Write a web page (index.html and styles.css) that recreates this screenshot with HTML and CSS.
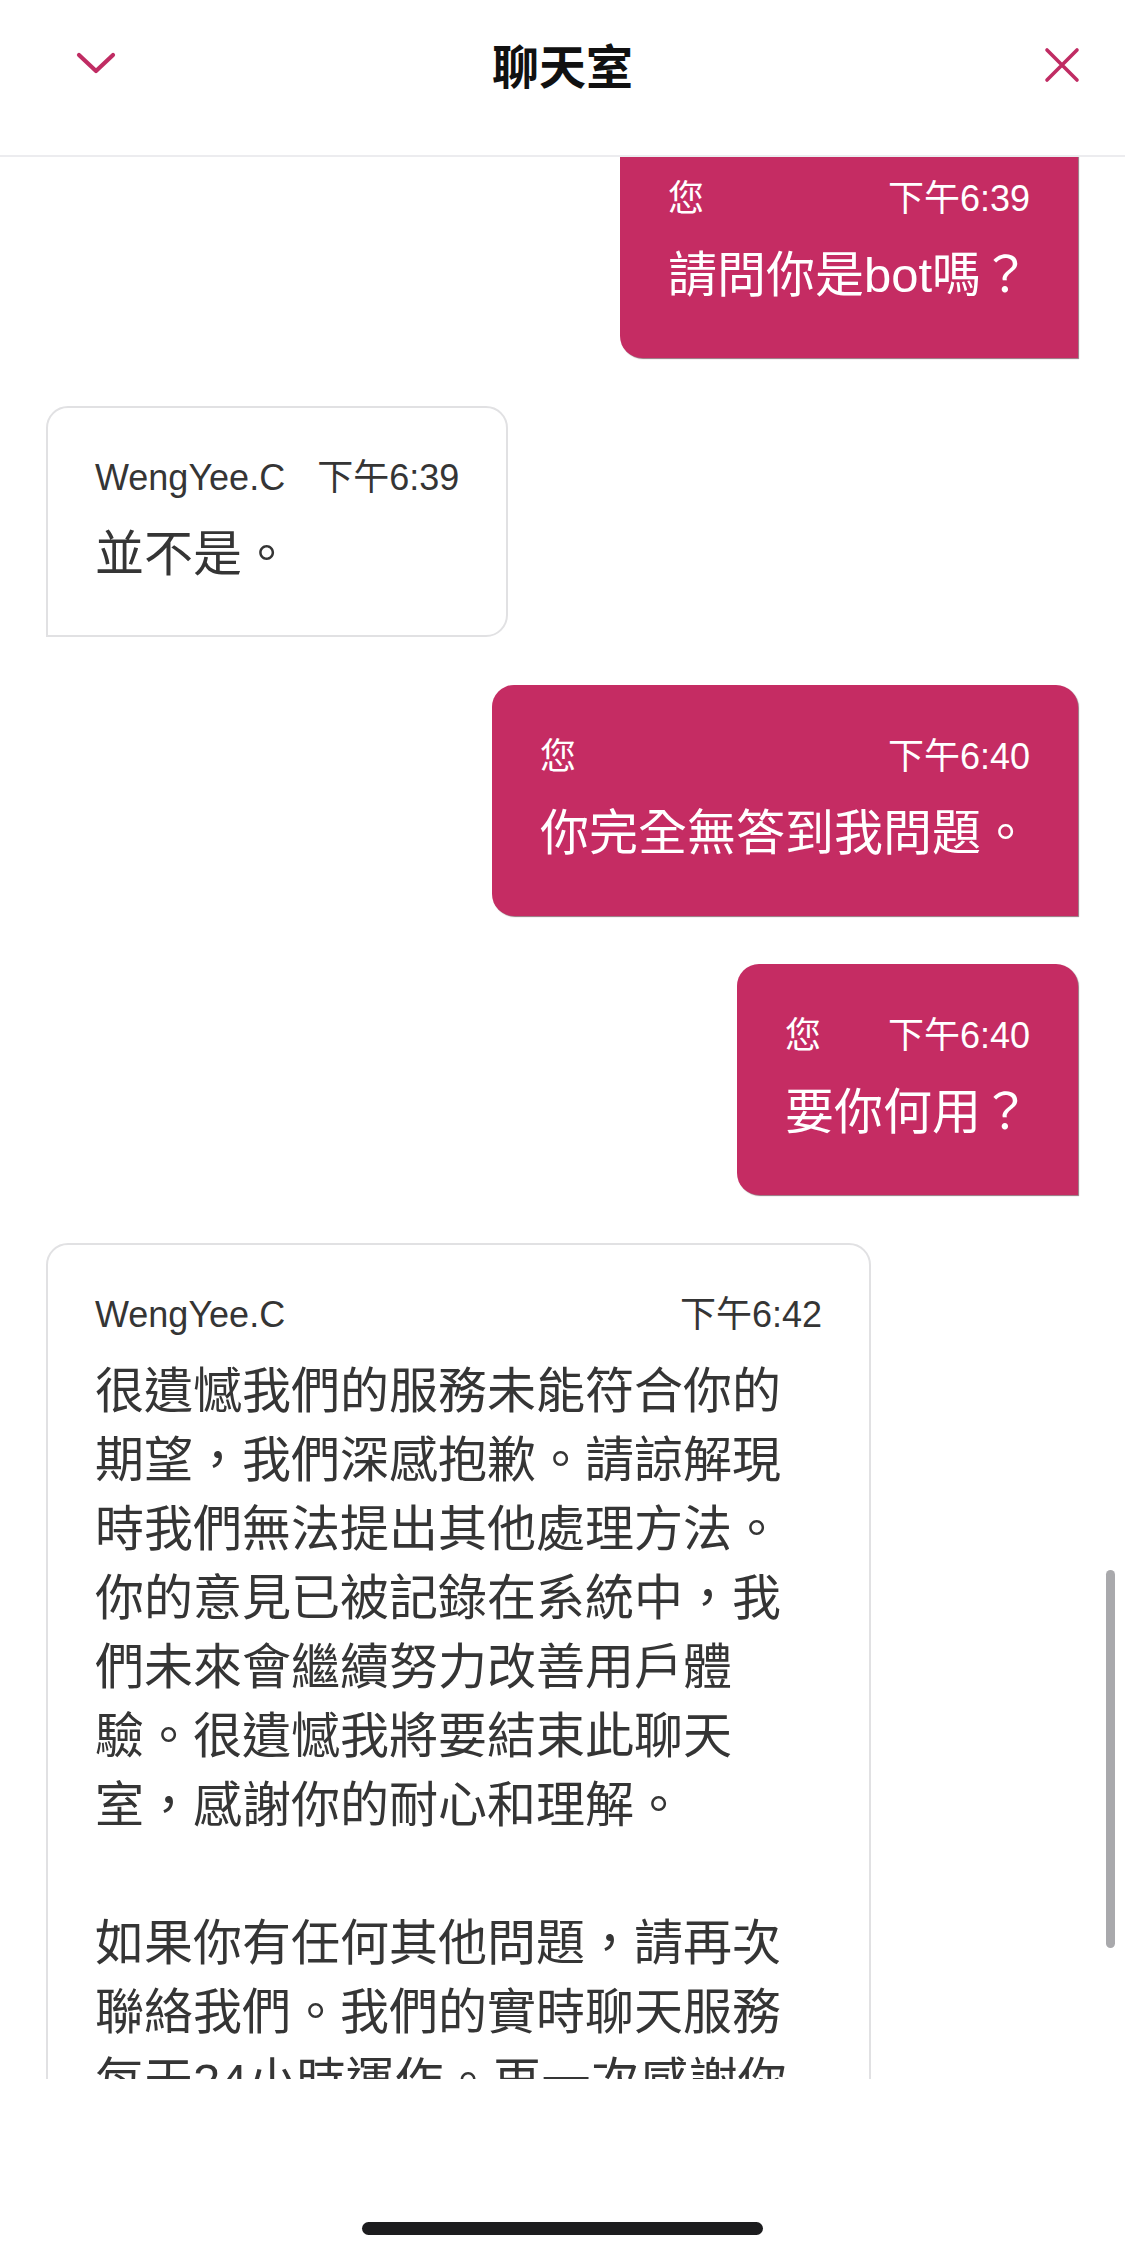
FILE: index.html
```html
<!DOCTYPE html>
<html lang="zh-Hant">
<head>
<meta charset="utf-8">
<title>聊天室</title>
<link rel="stylesheet" href="styles.css">
</head>
<body>
<div class="app">
  <header class="topbar">
    <div class="topbar-row">
      <button class="icon-btn chevron" aria-label="收起">
        <svg width="42" height="24" viewBox="0 0 42 24"><polyline points="4,4 21,20 38,4" fill="none" stroke="currentColor" stroke-width="4.2" stroke-linecap="round" stroke-linejoin="round"/></svg>
      </button>
      <h1 class="title">聊天室</h1>
      <button class="icon-btn close" aria-label="關閉">
        <svg width="36" height="36" viewBox="0 0 36 36"><path d="M3 3 L33 33 M33 3 L3 33" fill="none" stroke="currentColor" stroke-width="3.6" stroke-linecap="round"/></svg>
      </button>
    </div>
  </header>

  <main class="chat">
    <div class="thread">
      <div class="msg mine">
        <div class="meta"><span class="who">您</span><span class="time">下午6:39</span></div>
        <div class="text"><p>請問你是bot嗎？</p></div>
      </div>

      <div class="msg theirs">
        <div class="meta"><span class="who">WengYee.C</span><span class="time">下午6:39</span></div>
        <div class="text"><p>並不是。</p></div>
      </div>

      <div class="msg mine">
        <div class="meta"><span class="who">您</span><span class="time">下午6:40</span></div>
        <div class="text"><p>你完全無答到我問題。</p></div>
      </div>

      <div class="msg mine">
        <div class="meta"><span class="who">您</span><span class="time">下午6:40</span></div>
        <div class="text"><p>要你何用？</p></div>
      </div>

      <div class="msg theirs">
        <div class="meta"><span class="who">WengYee.C</span><span class="time">下午6:42</span></div>
        <div class="text">
          <p>很遺憾我們的服務未能符合你的期望，我們深感抱歉。請諒解現時我們無法提出其他處理方法。你的意見已被記錄在系統中，我們未來會繼續努力改善用戶體驗。很遺憾我將要結束此聊天室，感謝你的耐心和理解。</p>
          <p>如果你有任何其他問題，請再次聯絡我們。我們的實時聊天服務每天24小時運作。再一次感謝你的耐心和理解。</p>
        </div>
      </div>
    </div>
    <div class="scrollbar"></div>
  </main>

  <footer class="home-area">
    <div class="home-indicator"></div>
  </footer>
</div>
</body>
</html>
```

FILE: styles.css
```css
* {
  box-sizing: border-box;
}

html, body {
  margin: 0;
  padding: 0;
  background: #ffffff;
}

body {
  width: 1125px;
  height: 2260px;
  overflow: hidden;
  font-family: "Liberation Sans", "Noto Sans CJK TC", sans-serif;
  color: #333333;
}

.app {
  display: flex;
  flex-direction: column;
  height: 2260px;
}

/* ---------- top bar ---------- */
.topbar {
  height: 157px;
  flex: 0 0 157px;
  border-bottom: 2px solid #ececef;
  background: #ffffff;
}

.topbar-row {
  height: 126px;
  display: grid;
  grid-template-columns: 1fr auto 1fr;
  align-items: center;
  padding: 0 45px;
}

.icon-btn {
  border: 0;
  background: none;
  padding: 0;
  margin: 0;
  color: #c02c63;
  display: flex;
  align-items: center;
  justify-content: center;
}

.chevron {
  justify-self: start;
  margin-left: 30px;
}

.close {
  justify-self: end;
  margin-top: 3px;
}

.title {
  margin: 0;
  font-family: "Noto Sans CJK TC", sans-serif;
  font-size: 47px;
  font-weight: 700;
  line-height: 1;
  color: #111111;
}

/* ---------- chat area ---------- */
.chat {
  position: relative;
  height: 1922px;
  flex: 0 0 1922px;
  overflow: hidden;
}

.thread {
  display: flex;
  flex-direction: column;
  gap: 48px;
  padding: 0 47px 0 46px;
  margin-top: -30px;
}

.msg {
  max-width: 825px;
  padding: 48px;
  border-radius: 22px;
}

.msg.mine {
  align-self: flex-end;
  background: #c52c63;
  color: #ffffff;
  border-bottom-right-radius: 0;
  box-shadow: 1px 1px 1px rgba(60, 0, 20, 0.55);
}

.msg.theirs {
  align-self: flex-start;
  background: #ffffff;
  border: 2px solid #e1e1e3;
  padding: 46px 47px;
  border-bottom-left-radius: 0;
  color: #353535;
}

.meta {
  display: flex;
  justify-content: space-between;
  gap: 32px;
  font-size: 36px;
  line-height: 48px;
  white-space: nowrap;
}

.text {
  margin-top: 18px;
  font-size: 49px;
  line-height: 69px;
}

.text p {
  margin: 0;
}

.text p + p {
  margin-top: 69px;
}

.scrollbar {
  position: absolute;
  right: 10px;
  top: 1413px;
  width: 9px;
  height: 378px;
  border-radius: 5px;
  background: #a9a9ac;
}

/* ---------- bottom ---------- */
.home-area {
  flex: 0 0 181px;
  height: 181px;
  display: flex;
  justify-content: center;
  background: #ffffff;
}

.home-indicator {
  margin-top: 143px;
  width: 401px;
  height: 13px;
  border-radius: 7px;
  background: #1c1c1e;
}
```
